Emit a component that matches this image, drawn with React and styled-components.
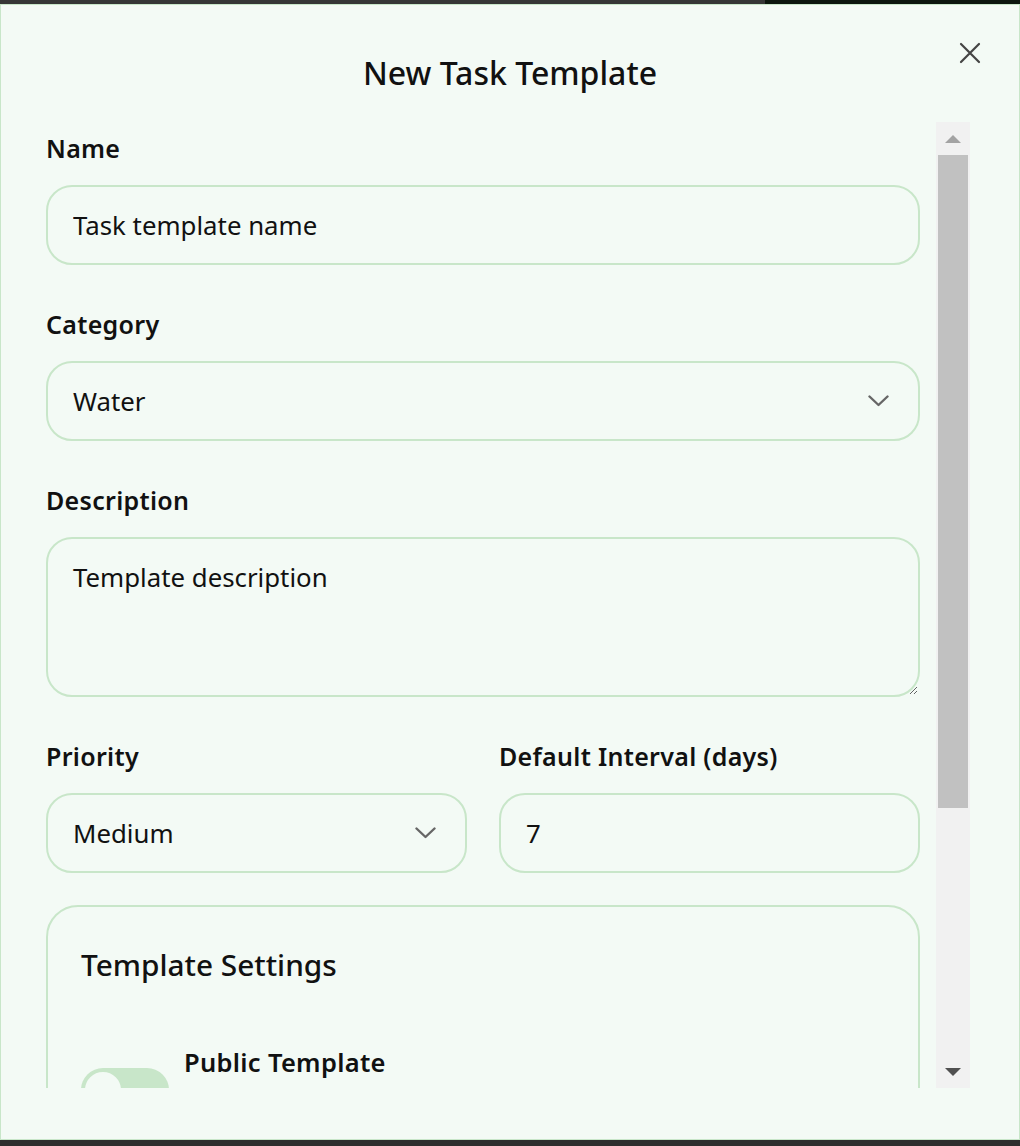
import React from "react";
import styled, { createGlobalStyle } from "styled-components";

const GlobalStyle = createGlobalStyle`
  html, body { margin: 0; padding: 0; height: 100%; }
  body {
    background: #2d2d2d;
    font-family: "Noto Sans", "Open Sans", sans-serif;
    color: #111;
  }
  * { box-sizing: border-box; }
`;

const Page = styled.div`
  height: 100vh;
  display: flex;
  flex-direction: column;
  background: #2d2d2d;
`;

const TopStrip = styled.div`
  height: 4px;
  flex: none;
  background: linear-gradient(to right, #363636 75%, #0c160e 75%);
`;

const Modal = styled.div`
  height: 1136px;
  flex: none;
  width: 100%;
  display: flex;
  flex-direction: column;
  background: #f3faf5;
  border: 1px solid #c8e6c9;
`;

const Header = styled.div`
  position: relative;
  height: 117px;
  flex: none;
  padding-top: 48px;
  text-align: center;
`;

const Title = styled.h2`
  margin: 0;
  font-size: 32px;
  line-height: 40px;
  font-weight: 500;
  color: #111;
`;

const CloseButton = styled.button`
  position: absolute;
  top: 32px;
  right: 33px;
  width: 32px;
  height: 32px;
  padding: 0;
  border: none;
  background: transparent;
  display: flex;
  align-items: center;
  justify-content: center;
  cursor: pointer;
`;

const ScrollArea = styled.div`
  height: 966px;
  flex: none;
  margin: 0 49px 0 45px;
  display: flex;
`;

const ScrollContent = styled.div`
  flex: 1;
  min-width: 0;
  overflow: hidden;
  padding-right: 16px;
`;

const ScrollBar = styled.div`
  width: 34px;
  flex: none;
  display: flex;
  flex-direction: column;
  background: #f1f1f1;
`;

const ArrowButton = styled.div`
  height: 33px;
  flex: none;
  display: flex;
  align-items: center;
  justify-content: center;
`;

const Triangle = styled.div`
  width: 0;
  height: 0;
  border-left: 8px solid transparent;
  border-right: 8px solid transparent;
  ${(p) =>
    p.$up
      ? "border-bottom: 8px solid #a3a3a3;"
      : "border-top: 8px solid #505050;"}
`;

const ThumbTrack = styled.div`
  flex: 1;
  padding: 0 2px;
`;

const Thumb = styled.div`
  height: ${(p) => p.$size}px;
  background: #c1c1c1;
`;

const Form = styled.form`
  display: flex;
  flex-direction: column;
  gap: 43px;
  padding: 10px 0 0;
`;

const Field = styled.div`
  display: flex;
  flex-direction: column;
  gap: 20px;
  min-width: 0;
`;

const Label = styled.label`
  font-size: 25px;
  line-height: 33px;
  font-weight: 600;
  letter-spacing: 0.3px;
  color: #111;
`;

const boxStyles = `
  width: 100%;
  border: 2px solid #c8e6c9;
  border-radius: 26px;
  background: #f3faf5;
  font-family: "Noto Sans", "Open Sans", sans-serif;
  font-size: 25.8px;
  color: #111;
  outline: none;
`;

const TextInput = styled.input`
  ${boxStyles}
  height: 80px;
  padding: 0 25px;
  &::placeholder { color: #111; opacity: 1; }
`;

const TextArea = styled.textarea`
  ${boxStyles}
  height: 160px;
  padding: 22px 25px;
  line-height: 32px;
  resize: vertical;
  display: block;
  &::placeholder { color: #111; opacity: 1; }
`;

const SelectBox = styled.div`
  ${boxStyles}
  height: 80px;
  padding: 0 ${(p) => p.$chevronPad}px 0 25px;
  display: flex;
  align-items: center;
  justify-content: space-between;
`;

const Row = styled.div`
  display: grid;
  grid-template-columns: 1fr 1fr;
  gap: 32px;
`;

const Card = styled.section`
  margin-top: -11px;
  border: 2px solid #c8e6c9;
  border-radius: 32px;
  padding: 38px 33px 32px;
  display: flex;
  flex-direction: column;
`;

const CardTitle = styled.h3`
  margin: 0 0 45px;
  font-size: 29.8px;
  line-height: 40px;
  font-weight: 500;
  color: #111;
`;

const ToggleRow = styled.div`
  display: flex;
  align-items: flex-start;
  gap: 15px;
  padding: 16px 0;
`;

const Switch = styled.div`
  flex: none;
  width: 88px;
  height: 44px;
  margin-top: 22px;
  border-radius: 22px;
  background: #c8e6c9;
  padding: 2px;
  display: flex;
  justify-content: ${(p) => (p.$on ? "flex-end" : "flex-start")};
`;

const Knob = styled.div`
  width: 40px;
  height: 40px;
  border-radius: 50%;
  background: #f3faf5;
  border: 2px solid #c8e6c9;
`;

const ToggleTitle = styled.div`
  font-size: 25.5px;
  line-height: 32px;
  font-weight: 600;
  letter-spacing: 0.3px;
  color: #111;
`;

const Chevron = () => (
  <svg width="21" height="12" viewBox="0 0 21 12" fill="none">
    <path d="M1.5 1.5 L10.5 10 L19.5 1.5" stroke="#666" strokeWidth="2.4" strokeLinecap="round" strokeLinejoin="round" />
  </svg>
);

const CloseIcon = () => (
  <svg width="22" height="22" viewBox="0 0 22 22" fill="none">
    <path d="M2 2 L20 20 M20 2 L2 20" stroke="#444" strokeWidth="2.2" strokeLinecap="round" />
  </svg>
);

export default function App() {
  return (
    <>
      <GlobalStyle />
      <Page>
        <TopStrip />
        <Modal>
          <Header>
            <Title>New Task Template</Title>
            <CloseButton aria-label="Close">
              <CloseIcon />
            </CloseButton>
          </Header>
          <ScrollArea>
            <ScrollContent>
              <Form onSubmit={(e) => e.preventDefault()}>
                <Field>
                  <Label>Name</Label>
                  <TextInput placeholder="Task template name" />
                </Field>
                <Field>
                  <Label>Category</Label>
                  <SelectBox $chevronPad={29}>
                    <span>Water</span>
                    <Chevron />
                  </SelectBox>
                </Field>
                <Field>
                  <Label>Description</Label>
                  <TextArea placeholder="Template description" />
                </Field>
                <Row>
                  <Field>
                    <Label>Priority</Label>
                    <SelectBox $chevronPad={29}>
                      <span>Medium</span>
                      <Chevron />
                    </SelectBox>
                  </Field>
                  <Field>
                    <Label>Default Interval (days)</Label>
                    <TextInput defaultValue="7" type="text" />
                  </Field>
                </Row>
                <Card>
                  <CardTitle>Template Settings</CardTitle>
                  <ToggleRow>
                    <Switch $on={false}>
                      <Knob />
                    </Switch>
                    <ToggleTitle>Public Template</ToggleTitle>
                  </ToggleRow>
                </Card>
              </Form>
            </ScrollContent>
            <ScrollBar aria-hidden="true">
              <ArrowButton>
                <Triangle $up />
              </ArrowButton>
              <ThumbTrack>
                <Thumb $size={653} />
              </ThumbTrack>
              <ArrowButton>
                <Triangle />
              </ArrowButton>
            </ScrollBar>
          </ScrollArea>
        </Modal>
      </Page>
    </>
  );
}
